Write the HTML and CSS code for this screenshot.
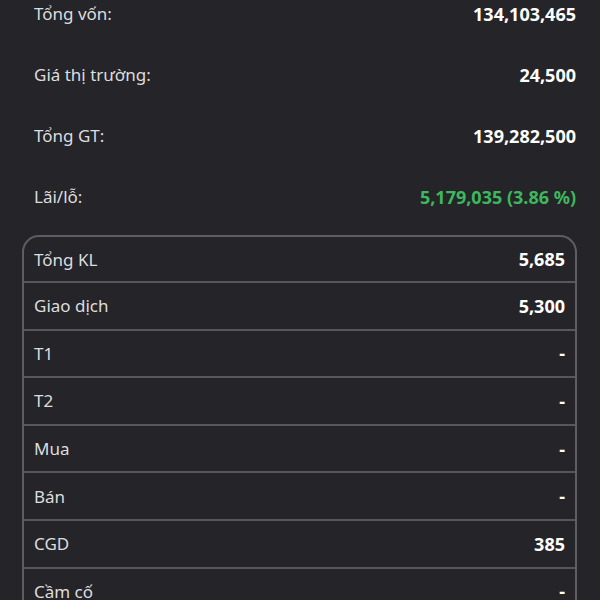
FILE: index.html
```html
<!DOCTYPE html>
<html lang="vi">
<head>
    <meta charset="UTF-8">
    <meta name="viewport" content="width=device-width, initial-scale=1.0">
    <title>Danh mục</title>
    <link rel="stylesheet" href="styles.css">
</head>
<body>
    <div id="summary">
        <div class="sum-row">
            <span class="label">Tổng vốn:</span>
            <span class="value">134,103,465</span>
        </div>
        <div class="sum-row">
            <span class="label">Giá thị trường:</span>
            <span class="value">24,500</span>
        </div>
        <div class="sum-row">
            <span class="label">Tổng GT:</span>
            <span class="value">139,282,500</span>
        </div>
        <div class="sum-row">
            <span class="label">Lãi/lỗ:</span>
            <span class="value up">5,179,035 (3.86 %)</span>
        </div>
    </div>
    <ul id="detail">
        <li><span class="label">Tổng KL</span><span class="value">5,685</span></li>
        <li><span class="label">Giao dịch</span><span class="value">5,300</span></li>
        <li><span class="label">T1</span><span class="value">-</span></li>
        <li><span class="label">T2</span><span class="value">-</span></li>
        <li><span class="label">Mua</span><span class="value">-</span></li>
        <li><span class="label">Bán</span><span class="value">-</span></li>
        <li><span class="label">CGD</span><span class="value">385</span></li>
        <li><span class="label">Cầm cố</span><span class="value">-</span></li>
    </ul>
</body>
</html>
```

FILE: styles.css
```css
*{
    margin: 0;
    padding: 0;
    box-sizing: border-box;
}
ul{
    list-style: none;
}
html,body{
    height: 100%;
    overflow: hidden;
}
body{
    background: #252429;
    font-family: "Noto Sans", "Open Sans", sans-serif;
    font-size: 17px;
    color: #dcdcde;
}
.label{
    color: #dddddf;
}
.value{
    color: #fff;
    font-size: 18px;
    font-weight: bold;
}
.value.up{
    color: #3db85c;
}
/* phần tổng */
#summary{
    margin-top: -17px;
    padding: 0 24px 0 34px;
}
.sum-row{
    display: flex;
    justify-content: space-between;
    align-items: center;
    height: 61px;
}
/* bảng chi tiết */
#detail{
    margin: 8px 23px 0 22px;
    border: 2px solid #5e5e62;
    border-bottom: none;
    border-radius: 17px 17px 0 0;
}
#detail li{
    display: flex;
    justify-content: space-between;
    align-items: center;
    height: 47.6px;
    padding: 0 10px;
    border-bottom: 2px solid #58585c;
}
#detail li:first-child{
    height: 46px;
}
```
